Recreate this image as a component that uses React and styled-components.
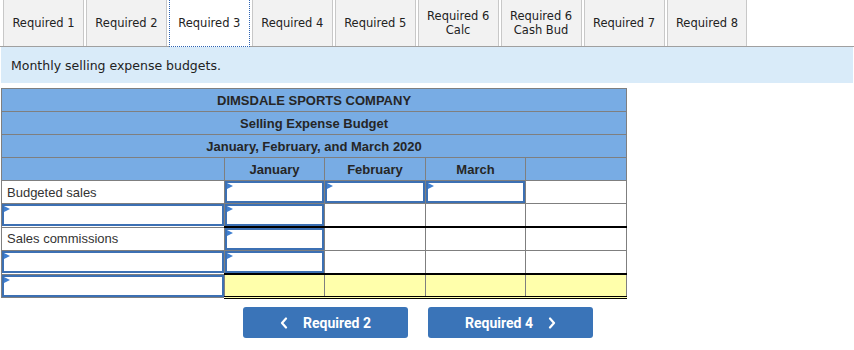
import React from 'react';
import styled, { createGlobalStyle } from 'styled-components';

const GlobalStyle = createGlobalStyle`
  html, body {
    margin: 0;
    padding: 0;
    background: #fff;
  }
  body {
    font-family: "DejaVu Sans", Verdana, sans-serif;
    color: #222;
  }
`;

const tabs = [
  ['Required 1'],
  ['Required 2'],
  ['Required 3'],
  ['Required 4'],
  ['Required 5'],
  ['Required 6', 'Calc'],
  ['Required 6', 'Cash Bud'],
  ['Required 7'],
  ['Required 8'],
];

const Page = styled.div`
  padding: 0 1px;
`;

const TabBar = styled.div`
  display: flex;
  gap: 2px;
  padding-left: 3px;
  height: 46px;
  border-bottom: 1px solid #a0a0a0;
  margin: 0 -1px;
`;

const Tab = styled.div`
  display: flex;
  flex-direction: column;
  align-items: center;
  justify-content: center;
  padding: 0 8.4px;
  font-size: 11.5px;
  line-height: 14px;
  color: #222;
  background: ${(p) => (p.$active ? '#fff' : '#f2f2f2')};
  border-left: 1px ${(p) => (p.$active ? 'dotted #2d63b3' : 'solid #c8c8c8')};
  border-right: 1px ${(p) => (p.$active ? 'dotted #2d63b3' : 'solid #c8c8c8')};
  border-bottom: ${(p) => (p.$active ? '1px dotted #2d63b3' : 'none')};
  height: 46px;
  margin-bottom: ${(p) => (p.$active ? '-1px' : '0')};
  white-space: nowrap;
`;

const Instruction = styled.div`
  background: #d9ebf9;
  height: 36px;
  display: flex;
  align-items: center;
  padding-left: 10px;
  font-size: 12.5px;
  color: #222;
`;

const Table = styled.table`
  margin-top: 5px;
  border-collapse: collapse;
  table-layout: fixed;
  width: 625px;
  font-family: "Liberation Sans", Arial, sans-serif;
  font-size: 13px;
  color: #222;
`;

const HeadCell = styled.td`
  background: #78ace4;
  border: 1px solid #7f7f7f;
  height: 22px;
  padding: 0;
  text-align: center;
  font-weight: bold;
  color: #262626;
`;

const Cell = styled.td`
  border: 1px solid #7f7f7f;
  border-top: ${(p) => (p.$topRule ? '2px solid #000' : '1px solid #7f7f7f')};
  border-bottom: ${(p) => (p.$total ? '3px double #000' : '1px solid #7f7f7f')};
  background: ${(p) => (p.$total ? '#ffffab' : '#fff')};
  height: ${(p) => (p.$topRule ? '21px' : '22px')};
  padding: 0;
  vertical-align: middle;
`;

const Label = styled.div`
  padding-left: 5px;
  color: #333;
`;

const InputBox = styled.div`
  position: relative;
  box-sizing: border-box;
  height: 22px;
  border: 2px solid #3c70b3;
  background: #fff;

  &::before {
    content: '';
    position: absolute;
    left: 0;
    top: 0;
    border-top: 3px solid transparent;
    border-bottom: 3px solid transparent;
    border-left: 6px solid #3f7fd0;
  }
`;

const Nav = styled.div`
  display: flex;
  justify-content: center;
  gap: 20px;
  width: 834px;
  margin-top: 8px;
`;

const NavButton = styled.button`
  width: 165px;
  height: 31px;
  border: none;
  border-radius: 3px;
  background: #3a74b8;
  color: #fff;
  font-family: Roboto, "Liberation Sans", sans-serif;
  font-weight: bold;
  font-size: 14px;
  display: flex;
  align-items: center;
  justify-content: center;
  gap: 15px;
  padding: 0;
  cursor: pointer;
`;

const Chevron = ({ dir }) => (
  <svg width="8" height="12" viewBox="0 0 8 12">
    <polyline
      points={dir === 'left' ? '6,1.5 2,6 6,10.5' : '2,1.5 6,6 2,10.5'}
      fill="none"
      stroke="#fff"
      strokeWidth="2.2"
      strokeLinecap="round"
      strokeLinejoin="round"
    />
  </svg>
);

const Input = () => <InputBox />;

export default function App() {
  return (
    <Page>
      <GlobalStyle />
      <TabBar>
        {tabs.map((t, i) => (
          <Tab key={i} $active={i === 2}>
            {t.map((line) => (
              <span key={line}>{line}</span>
            ))}
          </Tab>
        ))}
      </TabBar>
      <Instruction>Monthly selling expense budgets.</Instruction>

      <Table>
        <colgroup>
          <col style={{ width: 223 }} />
          <col style={{ width: 100 }} />
          <col style={{ width: 101 }} />
          <col style={{ width: 100 }} />
          <col style={{ width: 101 }} />
        </colgroup>
        <tbody>
          <tr>
            <HeadCell colSpan={5}>DIMSDALE SPORTS COMPANY</HeadCell>
          </tr>
          <tr>
            <HeadCell colSpan={5}>Selling Expense Budget</HeadCell>
          </tr>
          <tr>
            <HeadCell colSpan={5}>January, February, and March 2020</HeadCell>
          </tr>
          <tr>
            <HeadCell />
            <HeadCell>January</HeadCell>
            <HeadCell>February</HeadCell>
            <HeadCell>March</HeadCell>
            <HeadCell />
          </tr>
          <tr>
            <Cell><Label>Budgeted sales</Label></Cell>
            <Cell><Input /></Cell>
            <Cell><Input /></Cell>
            <Cell><Input /></Cell>
            <Cell />
          </tr>
          <tr>
            <Cell><Input /></Cell>
            <Cell><Input /></Cell>
            <Cell />
            <Cell />
            <Cell />
          </tr>
          <tr>
            <Cell><Label>Sales commissions</Label></Cell>
            <Cell $topRule><Input /></Cell>
            <Cell $topRule />
            <Cell $topRule />
            <Cell $topRule />
          </tr>
          <tr>
            <Cell><Input /></Cell>
            <Cell><Input /></Cell>
            <Cell />
            <Cell />
            <Cell />
          </tr>
          <tr>
            <Cell><Input /></Cell>
            <Cell $topRule $total />
            <Cell $topRule $total />
            <Cell $topRule $total />
            <Cell $topRule $total />
          </tr>
        </tbody>
      </Table>

      <Nav>
        <NavButton>
          <Chevron dir="left" />
          Required 2
        </NavButton>
        <NavButton>
          Required 4
          <Chevron dir="right" />
        </NavButton>
      </Nav>
    </Page>
  );
}
